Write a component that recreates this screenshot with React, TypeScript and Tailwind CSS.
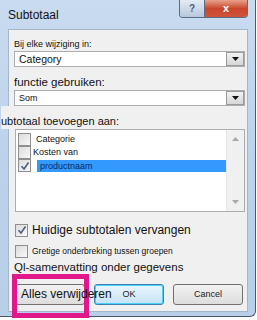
import React from 'react';

const font = { fontFamily: '"Liberation Sans", Arial, sans-serif' };

function Check({ checked }: { checked?: boolean }) {
  return (
    <span className="w-[13px] h-[13px] shrink-0 border border-[#8f8f8f] bg-gradient-to-br from-[#dcdcdc] to-[#f8f8f8] flex items-center justify-center">
      {checked && (
        <svg width="10" height="10" viewBox="0 0 10 10" className="block">
          <path d="M1.5 5.2 L4 8 L8.5 1.5" fill="none" stroke="#4a5f80" strokeWidth="1.6" />
        </svg>
      )}
    </span>
  );
}

function DropArrow() {
  return (
    <span className="w-[18px] h-[14px] shrink-0 border border-[#9a9a9a] bg-gradient-to-b from-[#f2f2f2] to-[#d6d6d6] flex items-center justify-center">
      <svg width="7" height="4" viewBox="0 0 7 4" className="block">
        <path d="M0 0 H7 L3.5 4 Z" fill="#111" />
      </svg>
    </span>
  );
}

function Select({ value, size }: { value: string; size: string }) {
  return (
    <div className="h-[16px] shrink-0 ml-[5px] w-[231px] border border-[#abadb3] bg-white flex overflow-hidden">
      <span className={`flex-1 pl-[4px] leading-[14px] text-[#111] ${size}`}>{value}</span>
      <DropArrow />
    </div>
  );
}

function Button({ label }: { label: string }) {
  return (
    <div className="w-[70px] h-[21px] rounded-[3px] border border-[#707070] bg-gradient-to-b from-[#f2f2f2] to-[#dddddd] flex items-center justify-center text-[9px] leading-none text-[#222]">
      {label}
    </div>
  );
}

export default function App() {
  return (
    <div className="w-[257px] h-[320px] bg-white overflow-hidden" style={font}>
      <div className="relative w-[256px] h-[317px] rounded-br-[6px] border-r border-b border-[#4b5a6d] bg-gradient-to-b from-[#c9dbef] via-[#bcd2ec] to-[#b8cfe9] flex flex-col">
        <div className="h-[29px] shrink-0 pl-[8px] flex items-center text-[12px] text-[#111]">Subtotaal</div>
        <div className="absolute top-0 right-[7px] flex h-[18px] rounded-b-[4px] border border-t-0 border-[#5c6d83] overflow-hidden">
          <div className="w-[25px] bg-gradient-to-b from-[#e3ebf5] to-[#b7c8dc] border-r border-[#5c6d83] flex items-center justify-center text-[10px] font-bold text-[#4f6076]">?</div>
          <div className="w-[42px] bg-gradient-to-b from-[#e8a08c] via-[#c9462c] to-[#d0543a] flex items-center justify-center text-[11px] font-bold text-white">x</div>
        </div>
        <div className="ml-[8px] w-[240px] h-[283px] shrink-0 bg-[#f0f0f0] border border-[#a6b6ca] flex flex-col">
          <div className="h-[20px] shrink-0 pl-[5px] pt-[8px] text-[9px] leading-[12px] text-[#111]">Bij elke wijziging in:</div>
          <div className="h-[1px] shrink-0" />
          <Select value="Category" size="text-[10.5px]" />
          <div className="h-[23px] shrink-0 pl-[5px] pt-[7px] text-[11.5px] leading-[16px] text-[#111]">functie gebruiken:</div>
          <Select value="Som" size="text-[9px]" />
          <div className="h-[23px] shrink-0 -ml-[8px] pt-[8px] text-[11px] leading-[15px] text-[#111] bg-[#f0f0f0]">ubtotaal toevoegen aan:</div>
          <div className="ml-[6px] w-[230px] h-[83px] shrink-0 border border-[#abadb3] bg-white flex overflow-hidden">
            <div className="flex-1 flex flex-col pt-[3px]">
              <div className="h-[13px] flex items-center gap-[5px] pl-[2px] text-[9px] leading-none text-[#111]">
                <Check />
                <span>Categorie</span>
              </div>
              <div className="h-[13px] flex items-center gap-[2px] pl-[2px] text-[9px] leading-none text-[#111]">
                <Check />
                <span>Kosten van</span>
              </div>
              <div className="h-[13px] flex items-center pl-[2px] text-[9px] leading-none">
                <Check checked />
                <span className="ml-[6px] flex-1 h-[12px] bg-[#3399ff] text-[#0b2a5a] pl-[3px] leading-[12px]">productnaam</span>
              </div>
            </div>
            <div className="w-[18px] h-[81px] bg-[#f0f0f0] border-l border-[#e6e6e6] flex flex-col items-center justify-between py-[7px]">
              <svg width="7" height="4" viewBox="0 0 7 4" className="block"><path d="M0 4 H7 L3.5 0 Z" fill="#a9a9a9" /></svg>
              <svg width="7" height="4" viewBox="0 0 7 4" className="block"><path d="M0 0 H7 L3.5 4 Z" fill="#a9a9a9" /></svg>
            </div>
          </div>
          <div className="h-[26px] shrink-0 mt-[5px] pl-[6px] flex items-center gap-[4px] text-[12px] leading-none text-[#111]">
            <Check checked />
            <span>Huidige subtotalen vervangen</span>
          </div>
          <div className="h-[14px] shrink-0 mt-[1px] pl-[6px] flex items-center gap-[4px] text-[8.5px] leading-none text-[#111]">
            <Check />
            <span>Gretige onderbreking tussen groepen</span>
          </div>
          <div className="h-[18px] shrink-0 mt-[1px] pl-[5px] flex items-center text-[11.5px] leading-none text-[#111]">Ql-samenvatting onder gegevens</div>
          <div className="h-[21px] shrink-0 mt-[7px] pl-[6px] flex gap-[9px]">
            <div className="relative">
              <Button label="" />
              <div className="absolute -left-[3px] -top-[10px] w-[77px] h-[44px] border-[5px] border-[#e0188c]" />
              <span className="absolute left-[6px] top-[3px] text-[12px] leading-[14px] text-[#111] whitespace-nowrap">Alles verwijderen</span>
            </div>
            <div className="w-[70px] h-[21px] rounded-[3px] border border-[#3c7fb1] bg-gradient-to-b from-[#eaf6fd] to-[#c6e3f7] shadow-[inset_0_0_0_1px_#48d4f8] flex items-center justify-center text-[9px] leading-none text-[#222]">OK</div>
            <Button label="Cancel" />
          </div>
        </div>
      </div>
    </div>
  );
}
